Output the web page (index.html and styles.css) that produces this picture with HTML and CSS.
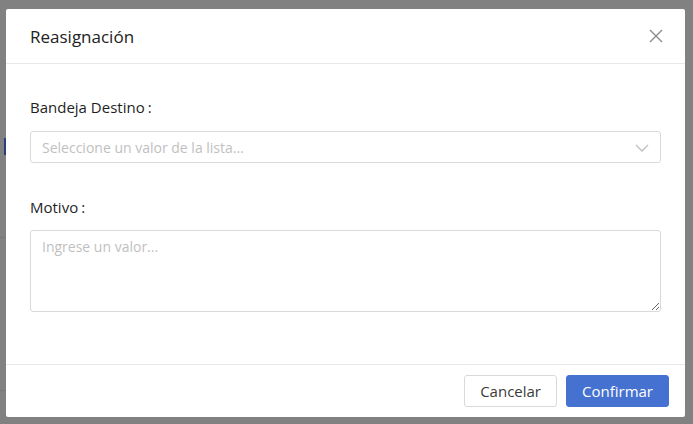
FILE: index.html
```html
<!DOCTYPE html>
<html lang="es">
<head>
<meta charset="utf-8">
<title>Reasignación</title>
<link rel="stylesheet" href="styles.css">
</head>
<body>
<div class="backdrop">
  <div class="page-hint hint-blue"></div>
  <div class="page-hint hint-line1"></div>
  <div class="page-hint hint-line2"></div>
  <div class="modal">
    <div class="modal-header">
      <span class="modal-title">Reasignación</span>
      <button class="close" aria-label="Cerrar">
        <svg width="14" height="14" viewBox="0 0 14 14"><path d="M1 1 L13 13 M13 1 L1 13" stroke="#8c8c8c" stroke-width="1.4" fill="none"/></svg>
      </button>
    </div>
    <div class="modal-body">
      <div class="field">
        <label class="label">Bandeja Destino<span class="colon">:</span></label>
        <div class="select">
          <span class="placeholder">Seleccione un valor de la lista...</span>
          <svg class="chev" width="14" height="8" viewBox="0 0 14 8"><path d="M1 1 L7 7 L13 1" stroke="#bfbfbf" stroke-width="1.3" fill="none"/></svg>
        </div>
      </div>
      <div class="field last">
        <label class="label tight">Motivo<span class="colon">:</span></label>
        <textarea class="textarea" placeholder="Ingrese un valor..."></textarea>
      </div>
    </div>
    <div class="modal-footer">
      <button class="btn">Cancelar</button>
      <button class="btn primary">Confirmar</button>
    </div>
  </div>
</div>
</body>
</html>
```
FILE: styles.css
```css
* { box-sizing: border-box; }
html, body { margin: 0; padding: 0; }
body {
  font-family: "Open Sans", "Noto Sans", sans-serif;
  background: #808080;
  width: 693px;
  height: 424px;
  overflow: hidden;
}
.backdrop {
  position: relative;
  width: 693px;
  height: 424px;
  padding: 9px 0 0 6px;
  background: #818181;
}
.page-hint { position: absolute; }
.hint-blue { left: 4px; top: 138px; width: 3px; height: 17px; background: #2c3e7a; }
.hint-line1 { left: 0; top: 237px; width: 6px; height: 1px; background: #777; }
.hint-line2 { left: 0; top: 390px; width: 6px; height: 1px; background: #777; }
.modal {
  position: relative;
  width: 679px;
  height: 408px;
  background: #fff;
  border-radius: 2px;
  display: flex;
  flex-direction: column;
}
.modal-header {
  height: 55px;
  padding: 0 22px 0 24px;
  border-bottom: 1px solid #e8e8e8;
  display: flex;
  align-items: center;
  justify-content: space-between;
}
.modal-title {
  font-size: 17px;
  color: #222;
}
.close {
  border: 0;
  background: none;
  padding: 0;
  width: 14px;
  height: 14px;
  display: flex;
}
.modal-body {
  padding: 32px 24px 0 24px;
  flex: 1;
}
.field { margin-bottom: 33px; }
.field.last { margin-bottom: 0; }
.label {
  display: block;
  font-size: 15px;
  line-height: 22px;
  color: #1f1f1f;
  margin-bottom: 13px;
}
.label.tight { margin-bottom: 12px; }
.colon { margin-left: 3px; }
.select {
  height: 32px;
  border: 1px solid #d9d9d9;
  border-radius: 3px;
  display: flex;
  align-items: center;
  justify-content: space-between;
  padding: 0 11px 0 11px;
}
.placeholder {
  font-size: 14px;
  color: #bfbfbf;
}
.chev { margin-top: 1px; }
.textarea {
  display: block;
  width: 100%;
  height: 82px;
  border: 1px solid #d9d9d9;
  border-radius: 3px;
  padding: 6px 11px;
  font-family: inherit;
  font-size: 14px;
  color: #262626;
  resize: vertical;
  outline: none;
}
.textarea::placeholder { color: #bfbfbf; }
.modal-footer {
  height: 53px;
  border-top: 1px solid #e8e8e8;
  display: flex;
  align-items: center;
  justify-content: flex-end;
  gap: 9px;
  padding: 0 16px;
}
.btn {
  height: 32px;
  padding: 0 15px;
  font-family: inherit;
  font-size: 15px;
  color: #3a3a3a;
  background: #fff;
  border: 1px solid #d9d9d9;
  border-radius: 3px;
}
.btn.primary {
  background: #4571d0;
  border-color: #4571d0;
  color: #fff;
}
```
